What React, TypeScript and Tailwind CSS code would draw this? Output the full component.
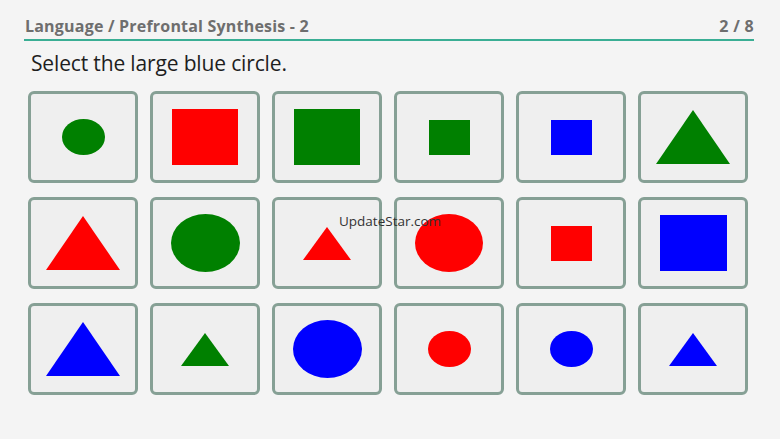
import React from "react";

type Shape = { kind: "circle" | "square" | "triangle"; color: string; w: number; h: number };

const G = "#008000";
const R = "#ff0000";
const B = "#0000ff";

const shapes: Shape[] = [
  { kind: "circle", color: G, w: 43, h: 36 },
  { kind: "square", color: R, w: 66, h: 56 },
  { kind: "square", color: G, w: 66, h: 56 },
  { kind: "square", color: G, w: 41, h: 35 },
  { kind: "square", color: B, w: 41, h: 35 },
  { kind: "triangle", color: G, w: 74, h: 54 },
  { kind: "triangle", color: R, w: 74, h: 54 },
  { kind: "circle", color: G, w: 69, h: 58 },
  { kind: "triangle", color: R, w: 48, h: 33 },
  { kind: "circle", color: R, w: 68, h: 58 },
  { kind: "square", color: R, w: 41, h: 35 },
  { kind: "square", color: B, w: 67, h: 56 },
  { kind: "triangle", color: B, w: 74, h: 54 },
  { kind: "triangle", color: G, w: 48, h: 33 },
  { kind: "circle", color: B, w: 69, h: 58 },
  { kind: "circle", color: R, w: 43, h: 36 },
  { kind: "circle", color: B, w: 43, h: 36 },
  { kind: "triangle", color: B, w: 48, h: 33 },
];

function ShapeSvg({ s }: { s: Shape }) {
  return (
    <svg width={s.w} height={s.h} viewBox={`0 0 ${s.w} ${s.h}`}>
      {s.kind === "circle" && <ellipse cx={s.w / 2} cy={s.h / 2} rx={s.w / 2} ry={s.h / 2} fill={s.color} />}
      {s.kind === "square" && <rect x={0} y={0} width={s.w} height={s.h} fill={s.color} />}
      {s.kind === "triangle" && <polygon points={`${s.w / 2},0 ${s.w},${s.h} 0,${s.h}`} fill={s.color} />}
    </svg>
  );
}

export default function App() {
  return (
    <div className="relative w-[780px] h-[439px] bg-[#f4f4f4] overflow-hidden" style={{ fontFamily: "'Open Sans', sans-serif" }}>
      <div className="ml-[24px] mr-[26px] pt-[16px] flex justify-between items-end border-b-2 border-[#3aae94] pb-[3px]">
        <span className="pl-[1px] text-[16px] font-bold text-[#6e6e6e] tracking-[0.2px] leading-[20px]">Language / Prefrontal Synthesis - 2</span>
        <span className="text-[16px] font-bold text-[#6e6e6e] tracking-[0.3px] leading-[20px]">2 / 8</span>
      </div>
      <div className="ml-[31px] mt-[8px] text-[21px] text-[#1e1e1e] leading-[28px] tracking-[-0.15px]">Select the large blue circle.</div>
      <div className="ml-[28px] mt-[14px] grid grid-cols-[repeat(6,110px)] gap-x-[12px] gap-y-[14px]">
        {shapes.map((s, i) => (
          <div key={i} className="w-[110px] h-[92px] rounded-[6px] border-[3px] border-[#86a095] bg-[#efefef] flex items-center justify-center">
            <ShapeSvg s={s} />
          </div>
        ))}
      </div>
      <div className="absolute left-[339px] top-[211px] text-[13.5px] text-[#333333] leading-[20px]">UpdateStar.com</div>
    </div>
  );
}
